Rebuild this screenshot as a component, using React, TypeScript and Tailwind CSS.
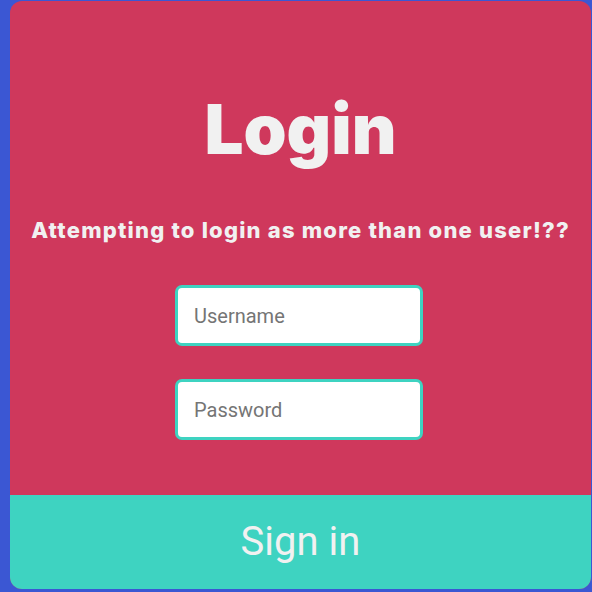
import React from "react"

const inputClass =
  "w-[248px] h-[61px] rounded-[7px] border-[3px] border-[#3ed3c1] bg-white px-[16px] text-[20px] text-[#333] placeholder:text-[#757575] outline-none font-['Roboto',sans-serif]"

export default function App() {
  return (
    <div className="w-[592px] h-[592px] bg-[#3b57d3] pl-[10px] pt-[1px] pr-px pb-[3px]">
      <div className="h-full flex flex-col rounded-[12px] overflow-hidden bg-[#cf385c]">
        <div className="flex-1 flex flex-col items-center">
          <h1 className="mt-[84px] text-[69px] leading-[88px] font-black text-[#f1f1f1] font-['Inter',sans-serif]">
            Login
          </h1>
          <p className="mt-[43px] text-[22px] leading-[28px] font-extrabold tracking-[1.2px] whitespace-nowrap text-[#f1f1f1] font-['Inter',sans-serif]">
            Attempting to login as more than one user!??
          </p>
          <form className="mt-[41px] mr-[3px] flex flex-col gap-[33px]">
            <input type="text" placeholder="Username" className={inputClass} />
            <input type="password" placeholder="Password" className={inputClass} />
          </form>
        </div>
        <button className="h-[94px] bg-[#3ed3c1] text-[#f1f1f1] text-[40px] font-['Roboto',sans-serif]">
          Sign in
        </button>
      </div>
    </div>
  )
}
